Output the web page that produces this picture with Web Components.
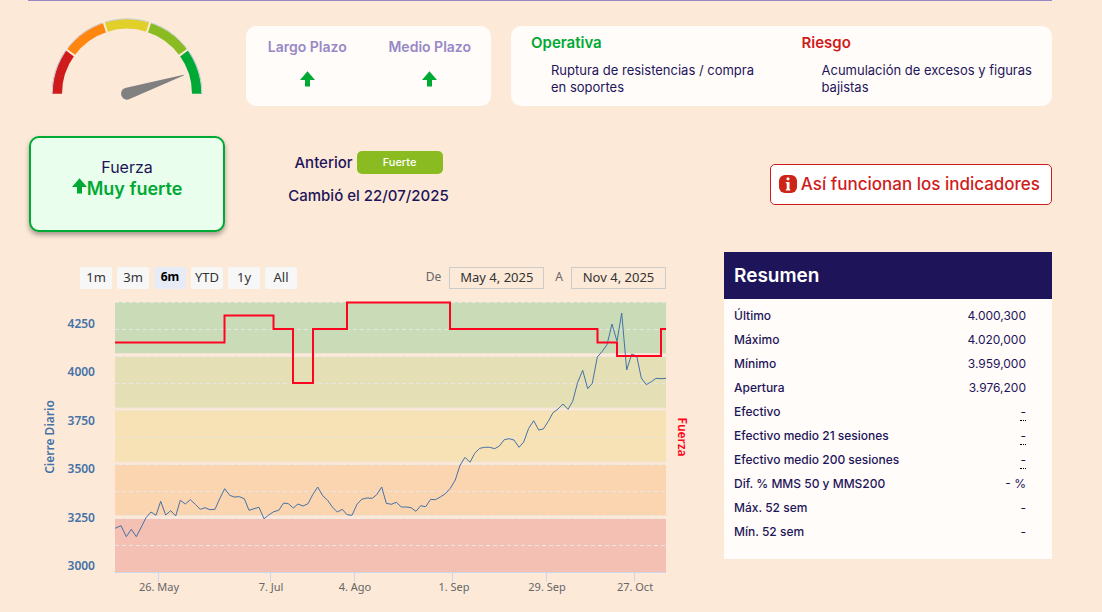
<!DOCTYPE html>
<html lang="es">
<head>
<meta charset="utf-8">
<meta name="viewport" content="width=device-width, initial-scale=1">
<title>Indicadores de fuerza</title>
<style>
  body { margin: 0; background: #fce9d8; color: #1e1459; font-family: Inter, "Open Sans", sans-serif; }
</style>
</head>
<body>
<strength-page></strength-page>

<template id="strength-page">
  <style>
    :host { display: block; padding: 0 50px 0 28px; }
    main { border-top: 1px solid #9789c6; }
    .top { display: grid; grid-template-columns: 198fr 245fr 541fr; gap: 20px; align-items: start; }
    .top > :not(strength-gauge) { margin-top: 25px; }
    .status { display: grid; grid-template-columns: 198fr 245fr 541fr; gap: 20px; align-items: center; margin-top: 30px; }
    .status previous-state { align-self: start; margin-top: 15px; }
    .status help-button { justify-self: end; }
    .detail { display: grid; grid-template-columns: minmax(0, 1fr) 328px; gap: 20px; align-items: start; margin-top: 20px; }
  </style>
  <main>
    <section class="top">
      <strength-gauge></strength-gauge>
      <info-card>
        <term-trend>Largo Plazo</term-trend>
        <term-trend>Medio Plazo</term-trend>
      </info-card>
      <info-card>
        <trade-note kind="good"><span slot="title">Operativa</span>Ruptura de resistencias / compra en soportes</trade-note>
        <trade-note kind="bad"><span slot="title">Riesgo</span>Acumulación de excesos y figuras bajistas</trade-note>
      </info-card>
    </section>
    <section class="status">
      <strength-card><span slot="label">Fuerza</span>Muy fuerte</strength-card>
      <previous-state><span slot="state">Fuerte</span><span slot="date">Cambió el 22/07/2025</span></previous-state>
      <help-button>Así funcionan los indicadores</help-button>
    </section>
    <section class="detail">
      <strength-chart></strength-chart>
      <summary-panel></summary-panel>
    </section>
  </main>
</template>

<template id="up-arrow">
  <style>
    :host { display: inline-block; width: 15px; height: 16px; }
    svg { display: block; width: 100%; height: 100%; }
  </style>
  <svg viewBox="0 0 15 16" aria-hidden="true"><path d="M7.500 .3 15 9H10v6.500H5V9H0z" fill="#00a933"/></svg>
</template>

<template id="strength-gauge">
  <style>
    :host { display: block; }
    svg { display: block; width: 100%; height: auto; }
  </style>
  <svg viewBox="28 1 198 104" role="img" aria-label="Fuerza: muy fuerte">
    <g fill="none" stroke-width="10">
      <path d="M57 93.700A70 70 0 0 1 70.370 52.550" stroke="#cf1b1b"/>
      <path d="M70.370 52.550A70 70 0 0 1 105.370 27.130" stroke="#ff870f"/>
      <path d="M105.370 27.130A70 70 0 0 1 148.630 27.130" stroke="#e1cf2a"/>
      <path d="M148.630 27.130A70 70 0 0 1 183.630 52.550" stroke="#8abc22"/>
      <path d="M183.630 52.550A70 70 0 0 1 197 93.700" stroke="#00a933"/>
    </g>
    <path d="M52.200 93.700A74.800 74.800 0 0 1 201.800 93.700" fill="none" stroke="#ccd6eb"/>
    <g stroke="#fce9d8" stroke-width="2">
      <path d="M75.230 56.090 65.510 49.030M107.220 32.830 103.510 21.420M146.780 32.830 150.490 21.420M178.770 56.090 188.490 49.030"/>
    </g>
    <path d="M125.100 87.900 183.700 74.800V75.500L129 99.300A6 6 0 1 1 125.100 87.900Z" fill="#808080"/>
  </svg>
</template>

<template id="info-card">
  <style>
    :host { display: flex; box-sizing: border-box; min-height: 80px; border-radius: 10px; background: #fffcf9; }
    ::slotted(*) { flex: 1; }
  </style>
  <slot></slot>
</template>

<template id="term-trend">
  <style>
    :host { display: flex; flex-direction: column; align-items: center; gap: 14px; padding-top: 11px; font-size: 14px; line-height: 20px; font-weight: 600; color: #9789c6; }
  </style>
  <slot></slot>
  <up-arrow></up-arrow>
</template>

<template id="trade-note">
  <style>
    :host { display: block; padding: 7px 10px 7px 20px; }
    h3 { margin: 0; font-size: 15px; line-height: 20px; font-weight: 600; color: #00a933; }
    :host([kind="bad"]) h3 { color: #cf1b1b; }
    p { margin: 9px 0 0 20px; font-size: 13px; line-height: 17px; }
  </style>
  <h3><slot name="title"></slot></h3>
  <p><slot></slot></p>
</template>

<template id="strength-card">
  <style>
    :host { display: block; box-sizing: border-box; min-height: 96px; margin: 0 1px; padding: 19px 10px; border: 2px solid #00a933; border-radius: 10px; background: #e9feec; box-shadow: 0 3px 5px rgba(0, 0, 0, .35); text-align: center; font-size: 16px; line-height: 21px; }
    div { display: flex; justify-content: center; font-size: 18px; font-weight: 600; color: #00a933; }
  </style>
  <slot name="label"></slot>
  <div><up-arrow></up-arrow><slot></slot></div>
</template>

<template id="previous-state">
  <style>
    :host { display: flex; flex-direction: column; align-items: center; gap: 10px; font-size: 15px; line-height: 23px; font-weight: 500; }
    .row { display: flex; gap: 4px; }
    .badge { width: 86px; border-radius: 5px; background: #8abc22; color: #fff; font-size: 11px; text-align: center; }
  </style>
  <div class="row">Anterior <span class="badge"><slot name="state"></slot></span></div>
  <slot name="date"></slot>
</template>

<template id="help-button">
  <style>
    :host { display: block; }
    button { display: flex; align-items: center; gap: 4px; box-sizing: border-box; height: 41px; padding: 0 11px 0 8px; border: 1px solid #cf1b1b; border-radius: 5px; background: #fff; color: #cf1b1b; font: 500 17px/24px Inter, "Open Sans", sans-serif; white-space: nowrap; }
    svg { width: 18px; height: 18px; }
  </style>
  <button type="button">
    <svg viewBox="0 0 18 18" aria-hidden="true"><rect width="18" height="18" rx="6" fill="#cc2518"/><circle cx="9" cy="3.800" r="1.600" fill="#fff"/><path d="M6.800 7H10.500V14.200H11.200V15.500H6.800V14.200H7.700V8.300H6.800z" fill="#fff"/></svg>
    <slot></slot>
  </button>
</template>

<template id="strength-chart">
  <style>
    :host { display: block; padding-top: 15px; font-family: "Noto Sans", "Open Sans", sans-serif; }
    .bar { display: flex; justify-content: space-between; padding: 0 38px 0 52px; }
    .ranges, .dates { display: flex; gap: 5px; }
    .dates { gap: 8px; }
    button { box-sizing: border-box; width: 32px; height: 22px; padding: 0 0 2px; border: 0; border-radius: 2px; background: #f7f7f7; color: #333; font: 13px/20px "Noto Sans", "Open Sans", sans-serif; white-space: nowrap; }
    button[aria-pressed="true"] { background: #e6ebf5; color: #000; font-size: 12px; font-weight: 700; }
    label { font-size: 12px; line-height: 20px; color: #666; }
    label + input + label { margin-left: 3px; }
    input { box-sizing: border-box; width: 95px; height: 22px; padding: 0 0 2px; border: 1px solid #ccc; background: none; color: #333; font: 13px/18px "Noto Sans", "Open Sans", sans-serif; text-align: center; }
    svg { display: block; width: 100%; height: auto; font-size: 11px; }
    .y { font-size: 12px; font-weight: 600; fill: #4572a7; text-anchor: end; }
    .x { fill: #666; text-anchor: middle; }
    .t { font-size: 12px; font-weight: 600; text-anchor: middle; }
  </style>
  <div class="bar">
    <div class="ranges">
      <button type="button">1m</button><button type="button">3m</button><button type="button" aria-pressed="true">6m</button><button type="button">YTD</button><button type="button">1y</button><button type="button">All</button>
    </div>
    <div class="dates">
      <label for="from">De</label><input id="from" type="text" value="May 4, 2025">
      <label for="to">A</label><input id="to" type="text" value="Nov 4, 2025">
    </div>
  </div>
  <svg viewBox="28 289 676 312" role="group" aria-label="Cierre diario y fuerza">
    <rect x="115" y="302" width="551" height="51" fill="#cadbb8"/>
    <rect x="115" y="357" width="551" height="51" fill="#e4dfb4"/>
    <rect x="115" y="410" width="551" height="52" fill="#f7e2b5"/>
    <rect x="115" y="465" width="551" height="50" fill="#fbd4b0"/>
    <rect x="115" y="519" width="551" height="53" fill="#f4c0b3"/>
    <path d="M115 353.500H666M115 408H666M115 462H666M115 515.500H666" stroke="#f3e2d3"/>
    <path d="M115 302.500H666M115 329.500H666M115 356.500H666M115 383.500H666M115 410.500H666M115 437.500H666M115 464.500H666M115 491.500H666M115 518.500H666M115 545.500H666" stroke="#e6e6e6" stroke-dasharray="4 3"/>
    <path d="M115 572.500H666M158.500 572V582M270.500 572V582M354.500 572V582M452.500 572V582M546.500 572V582M634.500 572V582" stroke="#ccd6eb"/>
    <polyline fill="none" stroke="#4572a7" stroke-linejoin="round" points="115,528.3 121,525.7 126.3,536.7 131.3,529.3 136.3,536.7 141.3,527 146,517.7 151,512 156,515.3 160.7,501.3 165.7,515 170.7,510.7 175.7,516 180.3,500.3 185.3,504 190.3,499.7 195.3,504.3 200.3,509.3 205,507.7 210,509.7 215,509.3 219.7,498.7 224.7,488.7 229.7,495.3 234.3,497 239.3,496.7 244.3,498.7 249,510.3 254,508.7 259,507.3 264,518.7 268.7,515 273.7,511.7 278.7,510.3 283.7,503 288.3,503.7 293.3,508 298,504 303,506 308,503.7 312.7,494.7 317.7,487 322.7,495.7 327.7,500.3 332.3,507 337.3,512 342.3,509.3 347,514.7 352,515.3 357,504.3 361.7,499.3 366.7,498 372.3,498.3 376.7,494.7 381.7,487 386.3,503.3 391.3,504.3 396.3,502.3 401.3,507 406,507 411,507.7 416,511.3 420.7,505.7 425.7,506.7 430.7,499.3 435.3,499.7 440.3,497 445.3,493.7 450.3,488.3 455.3,480 460,465.3 465,457.3 470,462.3 474.7,453.3 479.7,448.3 484.7,447.3 489.7,447.3 494.7,448.7 499.3,446 504.3,439.7 509,438.7 514,440 519,447.3 523.7,442 528.7,428.3 533.7,420.7 538.7,430 543.3,429 548.3,421.3 553,412.7 558,409 563,404 568,409.3 572.7,401.3 577.7,382.3 582.7,370.3 587.7,388.7 592.3,383.3 597.3,357 602.3,351.3 607,344.7 612,324 617,341.3 621.7,313 626.7,370 631.7,354 636.7,356 641.3,378 646.3,384.7 651.3,381.7 656,378.3 661,378.7 666,378.3"/>
    <path d="M115 342.500H224.500V315.500H273.500V329H293V383H313V329H347V302.500H450V329H597.500V342.500H617V356H661V329H666" fill="none" stroke="#ff0420" stroke-width="2"/>
    <g class="y"><text x="95" y="328">4250</text><text x="95" y="376">4000</text><text x="95" y="425">3750</text><text x="95" y="473">3500</text><text x="95" y="522">3250</text><text x="95" y="570">3000</text></g>
    <g class="x"><text x="159" y="591">26. May</text><text x="271" y="591">7. Jul</text><text x="355" y="591">4. Ago</text><text x="454" y="591">1. Sep</text><text x="547" y="591">29. Sep</text><text x="635" y="591">27. Oct</text></g>
    <text class="t" fill="#4572a7" transform="translate(54 437) rotate(-90)">Cierre Diario</text>
    <text class="t" fill="#ff0420" transform="translate(678 437) rotate(90)">Fuerza</text>
  </svg>
</template>

<template id="summary-panel">
  <style>
    :host { display: block; padding-bottom: 15px; background: #fffcf9; }
    h2 { margin: 0 0 5px; padding: 0 10px; background: #1e1459; color: #fff; font-size: 19px; line-height: 47px; font-weight: 600; }
    table { width: 100%; border-collapse: collapse; font-size: 12px; line-height: 16px; }
    th, td { height: 24px; padding: 0 26px 0 10px; box-sizing: border-box; font-weight: 500; text-align: left; }
    td { padding-left: 0; font-weight: 400; text-align: right; }
    abbr { padding-bottom: 1px; border-bottom: 1px dotted #000; text-decoration: none; }
  </style>
  <h2>Resumen</h2>
  <table>
    <tbody>
      <tr><th scope="row">Último</th><td>4.000,300</td></tr>
      <tr><th scope="row">Máximo</th><td>4.020,000</td></tr>
      <tr><th scope="row">Mínimo</th><td>3.959,000</td></tr>
      <tr><th scope="row">Apertura</th><td>3.976,200</td></tr>
      <tr><th scope="row">Efectivo</th><td><abbr>-</abbr></td></tr>
      <tr><th scope="row">Efectivo medio 21 sesiones</th><td><abbr>-</abbr></td></tr>
      <tr><th scope="row">Efectivo medio 200 sesiones</th><td><abbr>-</abbr></td></tr>
      <tr><th scope="row">Dif. % MMS 50 y MMS200</th><td>- %</td></tr>
      <tr><th scope="row">Máx. 52 sem</th><td>-</td></tr>
      <tr><th scope="row">Mín. 52 sem</th><td>-</td></tr>
    </tbody>
  </table>
</template>

<script>
  class TemplateElement extends HTMLElement {
    constructor() {
      super();
      const template = document.getElementById(this.localName);
      this.attachShadow({ mode: "open" }).append(document.importNode(template.content, true));
    }
  }
  class UpArrow extends TemplateElement {}
  class StrengthGauge extends TemplateElement {}
  class InfoCard extends TemplateElement {}
  class TermTrend extends TemplateElement {}
  class TradeNote extends TemplateElement {}
  class StrengthCard extends TemplateElement {}
  class PreviousState extends TemplateElement {}
  class HelpButton extends TemplateElement {}
  class SummaryPanel extends TemplateElement {}
  class StrengthPage extends TemplateElement {}
  class StrengthChart extends TemplateElement {
    connectedCallback() {
      const buttons = this.shadowRoot.querySelectorAll("button");
      buttons.forEach(button => button.addEventListener("click", () => {
        buttons.forEach(other => other.setAttribute("aria-pressed", String(other === button)));
      }));
    }
  }
  customElements.define("up-arrow", UpArrow);
  customElements.define("strength-gauge", StrengthGauge);
  customElements.define("info-card", InfoCard);
  customElements.define("term-trend", TermTrend);
  customElements.define("trade-note", TradeNote);
  customElements.define("strength-card", StrengthCard);
  customElements.define("previous-state", PreviousState);
  customElements.define("help-button", HelpButton);
  customElements.define("strength-chart", StrengthChart);
  customElements.define("summary-panel", SummaryPanel);
  customElements.define("strength-page", StrengthPage);
</script>
</body>
</html>
